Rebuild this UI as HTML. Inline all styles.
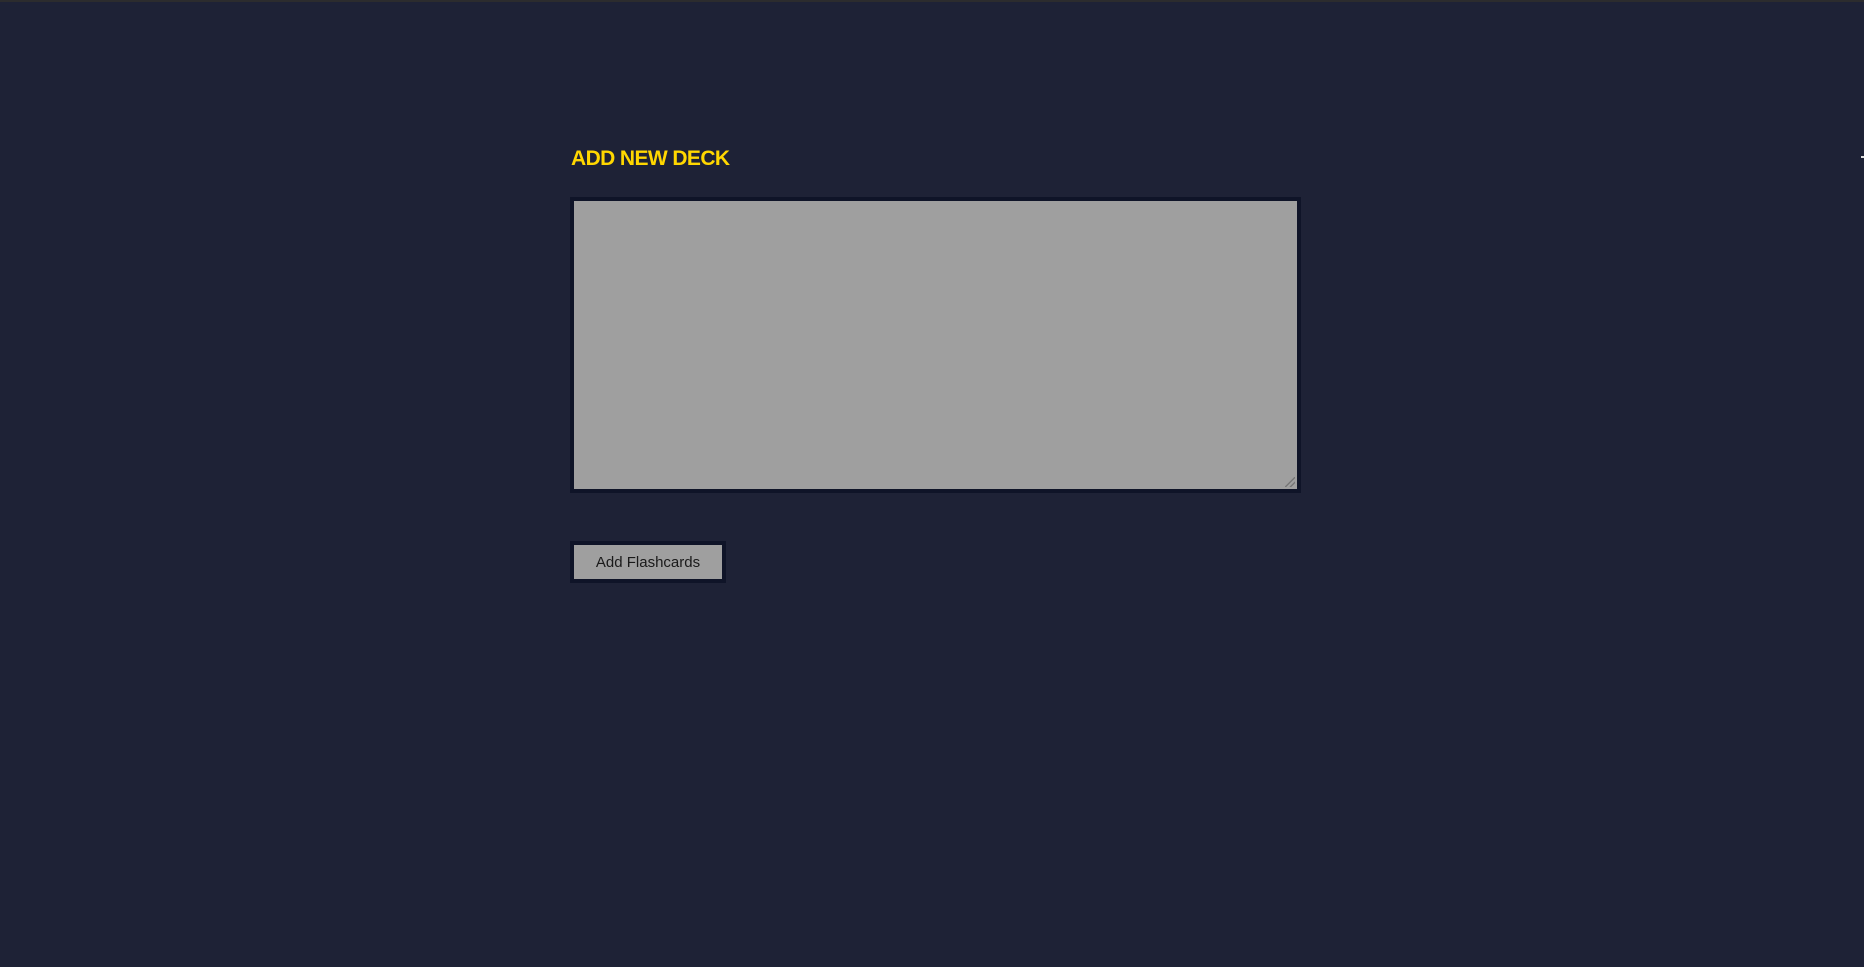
<!DOCTYPE html>
<html><head><style>
html,body{margin:0;padding:0;width:1864px;height:967px;background:#1e2236;overflow:hidden;}
.top{position:absolute;left:0;top:0;width:1864px;height:2px;background:#2c2c2e;}
h1{position:absolute;left:571px;top:147px;margin:0;font:bold 21px "Liberation Sans",sans-serif;color:#ffd700;line-height:24px;letter-spacing:-0.6px;}
.ta{position:absolute;left:570px;top:197px;width:723px;height:288px;border:4px solid #0f1428;background:#9f9f9f;}
.grip{position:absolute;right:2px;bottom:2px;width:10px;height:10px;background:linear-gradient(135deg,transparent 45%,#777 45%,#777 55%,transparent 55%,transparent 70%,#777 70%,#777 80%,transparent 80%);}
.btn{position:absolute;left:570px;top:541px;width:148px;height:34px;border:4px solid #0f1428;background:#9f9f9f;font:15px "Liberation Sans",sans-serif;color:#1a1a1a;text-align:center;line-height:36px;}
.mark{position:absolute;left:1861px;top:156px;width:3px;height:2px;background:#ddd;}
</style></head><body>
<div class="top"></div>
<h1>ADD NEW DECK</h1>
<div class="ta"><div class="grip"></div></div>
<div class="btn">Add Flashcards</div>
<div class="mark"></div>
</body></html>
